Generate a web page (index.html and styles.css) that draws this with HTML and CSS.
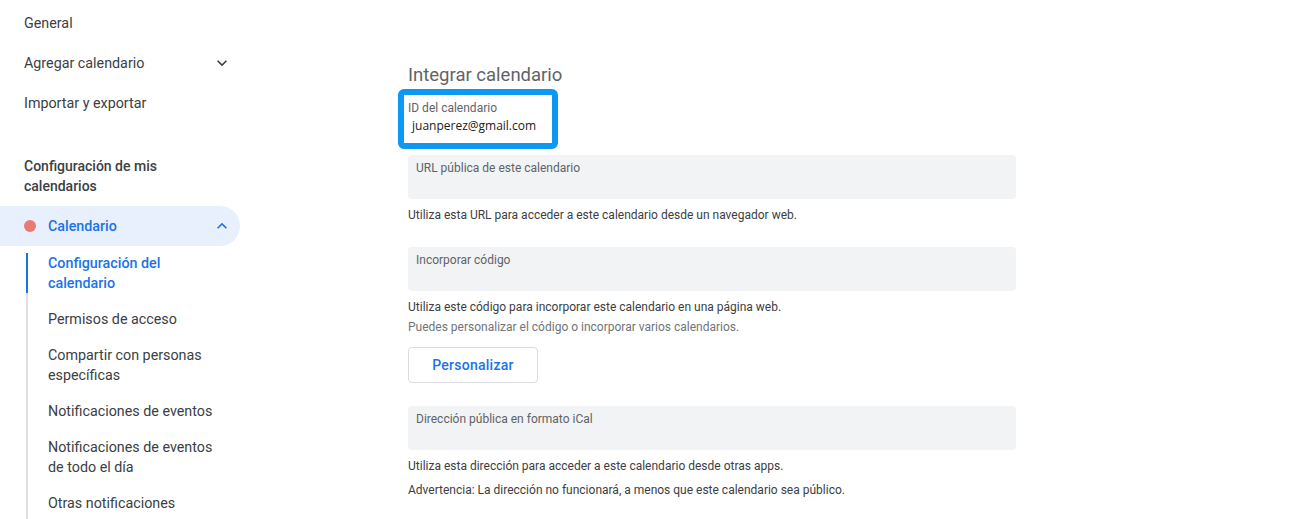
FILE: index.html
```html
<!DOCTYPE html>
<html lang="es">
<head>
<meta charset="utf-8">
<title>Integrar calendario</title>
<link rel="stylesheet" href="styles.css">
</head>
<body>
<div class="page">
  <nav class="sidebar">
    <div class="nav-row">General</div>
    <div class="nav-row">
      <span>Agregar calendario</span>
      <svg class="chev" viewBox="0 0 24 24" width="20" height="20"><path d="M16.59 8.59L12 13.17 7.41 8.59 6 10l6 6 6-6z" fill="#3c4043"/></svg>
    </div>
    <div class="nav-row">Importar y exportar</div>
    <div class="nav-head">Configuración de mis calendarios</div>
    <div class="pill">
      <span class="dot"></span>
      <span class="pill-text">Calendario</span>
      <svg class="chev" viewBox="0 0 24 24" width="20" height="20"><path d="M12 8l-6 6 1.41 1.41L12 10.83l4.59 4.58L18 14z" fill="#1a73e8"/></svg>
    </div>
    <div class="sublist">
      <div class="sub active">Configuración del<br>calendario</div>
      <div class="sub">Permisos de acceso</div>
      <div class="sub">Compartir con personas<br>específicas</div>
      <div class="sub">Notificaciones de eventos</div>
      <div class="sub">Notificaciones de eventos<br>de todo el día</div>
      <div class="sub">Otras notificaciones</div>
    </div>
  </nav>
  <main class="main">
    <h2 class="title">Integrar calendario</h2>
    <div class="idbox">
      <div class="id-label">ID del calendario</div>
      <div class="id-value">juanperez@gmail.com</div>
    </div>
    <div class="field"><div class="field-label">URL pública de este calendario</div></div>
    <p class="help">Utiliza esta URL para acceder a este calendario desde un navegador web.</p>
    <div class="field field-2"><div class="field-label">Incorporar código</div></div>
    <p class="help">Utiliza este código para incorporar este calendario en una página web.</p>
    <p class="help help-muted">Puedes personalizar el código o incorporar varios calendarios.</p>
    <button class="btn">Personalizar</button>
    <div class="field field-3"><div class="field-label">Dirección pública en formato iCal</div></div>
    <p class="help">Utiliza esta dirección para acceder a este calendario desde otras apps.</p>
    <p class="help help-warn">Advertencia: La dirección no funcionará, a menos que este calendario sea público.</p>
  </main>
</div>
</body>
</html>
```

FILE: styles.css
```css
* { box-sizing: border-box; }
html, body { margin: 0; padding: 0; background: #fff; }
body {
  font-family: Roboto, "Liberation Sans", Arial, sans-serif;
  color: #3c4043;
  width: 1306px;
  height: 519px;
  overflow: hidden;
}
.page { display: flex; align-items: flex-start; }

.sidebar { width: 240px; flex: none; padding-top: 3px; }
.nav-row {
  height: 40px;
  display: flex;
  align-items: center;
  justify-content: space-between;
  padding: 0 8px 0 24px;
  font-size: 14.3px;
  color: #3c4043;
}
.chev { display: block; flex: none; }
.nav-head {
  margin-top: 33px;
  padding: 0 24px;
  font-size: 14px;
  line-height: 20px;
  font-weight: 500;
  color: #3c4043;
  width: 200px;
}
.pill {
  margin-top: 10px;
  height: 40px;
  width: 240px;
  background: #e8f0fe;
  border-radius: 0 20px 20px 0;
  display: flex;
  align-items: center;
  padding: 0 8px 0 24px;
}
.dot {
  width: 12px; height: 12px;
  border-radius: 50%;
  background: #e67c73;
  flex: none;
}
.pill-text {
  margin-left: 12px;
  flex: 1;
  font-size: 14.3px;
  font-weight: 500;
  color: #1a73e8;
}
.sublist {
  margin: 7px 0 0 26px;
  border-left: 2px solid #e0e0e0;
  display: flex;
  flex-direction: column;
  gap: 16px;
  padding-bottom: 20px;
}
.sub {
  position: relative;
  padding-left: 20px;
  font-size: 14.3px;
  line-height: 20px;
  color: #3c4043;
}
.sub.active { color: #1a73e8; font-weight: 500; }
.sub.active::before {
  content: "";
  position: absolute;
  left: -2px; top: 0; bottom: 0;
  width: 2px;
  background: #1a73e8;
}

.main { padding: 63px 0 0 168px; width: 800px; }
.title {
  margin: 0;
  font-size: 18.5px;
  line-height: 24px;
  font-weight: 400;
  color: #5f6368;
}
.idbox {
  margin: 2px 0 0 -10px;
  width: 160px;
  height: 60px;
  border: 6px solid #0d99f2;
  border-radius: 6px;
  padding: 4px 4px 0 4px;
  background: #fff;
}
.id-label { font-size: 12px; line-height: 18px; color: #5f6368; }
.id-value {
  font-family: "Open Sans", "DejaVu Sans", sans-serif;
  font-size: 12px;
  line-height: 18px;
  color: #202124;
  padding-left: 4px;
}
.field {
  margin-top: 6px;
  width: 608px;
  height: 44px;
  background: #f1f3f4;
  border-radius: 4px;
  padding: 5px 8px;
}
.field-2 { margin-top: 22px; }
.field-3 { margin-top: 23px; }
.field-label { font-size: 12px; line-height: 16px; color: #5f6368; }
.help {
  margin: 6px 0 0;
  font-size: 12px;
  line-height: 20px;
  color: #3c4043;
}
.help-muted { margin-top: 0; color: #70757a; }
.help-warn { margin-top: 4px; }
.btn {
  display: block;
  margin-top: 10px;
  width: 130px;
  height: 36px;
  background: #fff;
  border: 1px solid #dadce0;
  border-radius: 4px;
  font-family: Roboto, "Liberation Sans", Arial, sans-serif;
  font-size: 14px;
  font-weight: 500;
  letter-spacing: .25px;
  color: #1a73e8;
  padding: 0;
}
```
